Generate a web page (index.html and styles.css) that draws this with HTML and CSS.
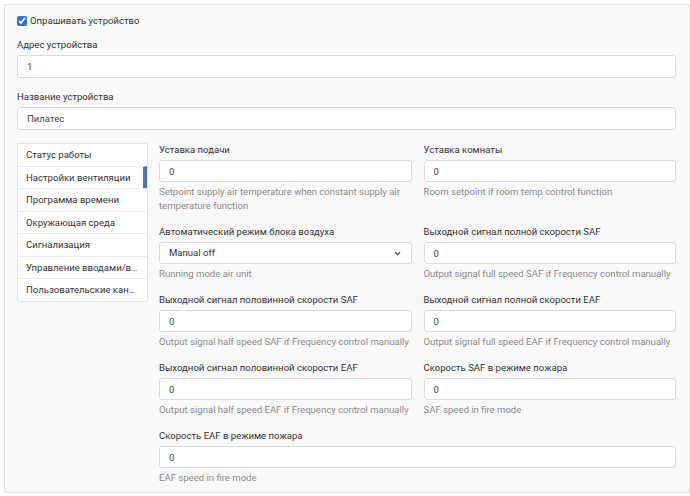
FILE: index.html
```html
<!DOCTYPE html>
<html lang="ru">
<head>
<meta charset="UTF-8">
<meta name="viewport" content="width=device-width, initial-scale=1.0">
<title>Устройство</title>
<link rel="stylesheet" href="styles.css">
</head>
<body>
    <div class="panel">
        <label class="check">
            <input type="checkbox" checked>
            <span>Опрашивать устройство</span>
        </label>
        <div class="field">
            <label>Адрес устройства</label>
            <input class="input input-lg" type="text" value="1">
        </div>
        <div class="field field-last">
            <label>Название устройства</label>
            <input class="input input-lg" type="text" value="Пилатес">
        </div>

        <div class="settings">
            <!-- вкладки слева -->
            <ul class="tabs">
                <li>Статус работы</li>
                <li class="active">Настройки вентиляции</li>
                <li>Программа времени</li>
                <li>Окружающая среда</li>
                <li>Сигнализация</li>
                <li>Управление вводами/выводами</li>
                <li>Пользовательские каналы</li>
            </ul>

            <!-- параметры -->
            <div class="params">
                <div class="param">
                    <label>Уставка подачи</label>
                    <input class="input" type="text" value="0">
                    <p class="help">Setpoint supply air temperature when constant supply air temperature function</p>
                </div>
                <div class="param">
                    <label>Уставка комнаты</label>
                    <input class="input" type="text" value="0">
                    <p class="help">Room setpoint if room temp control function</p>
                </div>
                <div class="param">
                    <label>Автоматический режим блока воздуха</label>
                    <div class="select-wrap">
                        <select class="input">
                            <option>Manual off</option>
                            <option>Manual reduced</option>
                            <option>Manual normal</option>
                            <option>Auto</option>
                        </select>
                        <svg class="chevron" width="7" height="5" viewBox="0 0 7 5"><path d="M1 1.2 L3.5 3.6 L6 1.2" fill="none" stroke="#444" stroke-width="1.2"/></svg>
                    </div>
                    <p class="help">Running mode air unit</p>
                </div>
                <div class="param">
                    <label>Выходной сигнал полной скорости SAF</label>
                    <input class="input" type="text" value="0">
                    <p class="help">Output signal full speed SAF if Frequency control manually</p>
                </div>
                <div class="param">
                    <label>Выходной сигнал половинной скорости SAF</label>
                    <input class="input" type="text" value="0">
                    <p class="help">Output signal half speed SAF if Frequency control manually</p>
                </div>
                <div class="param">
                    <label>Выходной сигнал полной скорости EAF</label>
                    <input class="input" type="text" value="0">
                    <p class="help">Output signal full speed EAF if Frequency control manually</p>
                </div>
                <div class="param">
                    <label>Выходной сигнал половинной скорости EAF</label>
                    <input class="input" type="text" value="0">
                    <p class="help">Output signal half speed EAF if Frequency control manually</p>
                </div>
                <div class="param">
                    <label>Скорость SAF в режиме пожара</label>
                    <input class="input" type="text" value="0">
                    <p class="help">SAF speed in fire mode</p>
                </div>
                <div class="param wide">
                    <label>Скорость EAF в режиме пожара</label>
                    <input class="input" type="text" value="0">
                    <p class="help">EAF speed in fire mode</p>
                </div>
            </div>
        </div>
    </div>
</body>
</html>
```

FILE: styles.css
```css
body {
    margin: 4px 0 3px 4px;
    background-color: #fff;
    font-family: Roboto, "Noto Sans", sans-serif;
    font-size: 9.55px;
    line-height: 14px;
    color: #333;
}
.panel {
    border: 1px solid #e4e4e4;
    background-color: #f9f9f9;
    padding: 9px 13px 7px 12px;
}
.check {
    display: flex;
    align-items: center;
    gap: 3px;
    height: 14px;
    margin-bottom: 10px;
}
.check input {
    width: 10px;
    height: 10px;
    margin: 0;
    accent-color: #3a72c0;
}
.field {
    margin-bottom: 12px;
}
.field-last {
    margin-bottom: 13px;
}
label {
    display: block;
}
.field label,
.param label {
    margin-bottom: 3px;
}
.input {
    display: block;
    width: 100%;
    box-sizing: border-box;
    height: 22px;
    padding: 0 9px;
    border: 1px solid #dcdcdc;
    border-radius: 3px;
    background-color: #fff;
    font: inherit;
    color: #444;
    outline: none;
}
.input-lg {
    height: 23px;
}

/* вкладки + параметры */
.settings {
    display: flex;
    align-items: flex-start;
    gap: 11px;
}
.tabs {
    flex: none;
    width: 131px;
    box-sizing: border-box;
    margin: 0;
    padding: 0;
    list-style: none;
    background-color: #fff;
    border: 1px solid #e4e4e4;
    border-radius: 2px;
}
.tabs li {
    height: 22.5px;
    box-sizing: border-box;
    padding: 0 8px;
    line-height: 21.5px;
    border-top: 1px solid #ececec;
    white-space: nowrap;
    overflow: hidden;
    text-overflow: ellipsis;
}
.tabs li:first-child {
    border-top: none;
    height: 21.5px;
}
.tabs li.active {
    border-right: 4px solid #4a76ab;
}
.params {
    flex: 1;
    display: grid;
    grid-template-columns: 1fr 1fr;
    column-gap: 12px;
    row-gap: 12px;
}
.wide {
    grid-column: 1 / -1;
}
.help {
    margin: 3px 0 0;
    color: #8b8b8b;
}
.select-wrap {
    position: relative;
}
.select-wrap select {
    appearance: none;
    -webkit-appearance: none;
    color: #333;
}
.chevron {
    position: absolute;
    right: 11px;
    top: 9px;
    pointer-events: none;
}
```
